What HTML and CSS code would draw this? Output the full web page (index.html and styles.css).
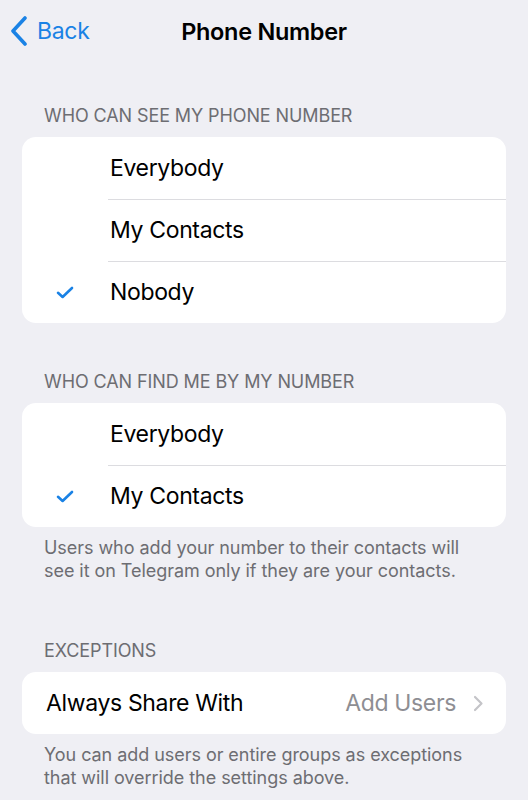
FILE: index.html
```html
<!DOCTYPE html>
<html>
<head>
<meta charset="utf-8">
<link rel="stylesheet" href="styles.css">
</head>
<body>
<div class="screen">
  <header class="nav">
    <div class="back">
      <svg class="back-chevron" width="18" height="30" viewBox="0 0 18 30"><path d="M15 2 L3 15 L15 28" fill="none" stroke="#1a82e5" stroke-width="3.6" stroke-linecap="round" stroke-linejoin="round"/></svg>
      <span class="back-label">Back</span>
    </div>
    <div class="title">Phone Number</div>
  </header>

  <section class="group g1">
    <div class="group-header">WHO CAN SEE MY PHONE NUMBER</div>
    <div class="card">
      <div class="row"><span class="check"></span><span class="label">Everybody</span></div>
      <div class="row"><span class="check"></span><span class="label">My Contacts</span></div>
      <div class="row"><span class="check"><svg width="18" height="13" viewBox="0 0 18 13"><path d="M2 6.8 L6.6 11 L16 2" fill="none" stroke="#1a82e5" stroke-width="2.6" stroke-linecap="round" stroke-linejoin="round"/></svg></span><span class="label">Nobody</span></div>
    </div>
  </section>

  <section class="group g2">
    <div class="group-header">WHO CAN FIND ME BY MY NUMBER</div>
    <div class="card">
      <div class="row"><span class="check"></span><span class="label">Everybody</span></div>
      <div class="row"><span class="check"><svg width="18" height="13" viewBox="0 0 18 13"><path d="M2 6.8 L6.6 11 L16 2" fill="none" stroke="#1a82e5" stroke-width="2.6" stroke-linecap="round" stroke-linejoin="round"/></svg></span><span class="label">My Contacts</span></div>
    </div>
    <div class="group-footer">Users who add your number to their contacts will see it on Telegram only if they are your contacts.</div>
  </section>

  <section class="group g3">
    <div class="group-header">EXCEPTIONS</div>
    <div class="card">
      <div class="row plain">
        <span class="label">Always Share With</span>
        <span class="value">Add Users</span>
        <svg class="disclosure" width="11" height="17" viewBox="0 0 11 17"><path d="M2 2 L8.5 8.5 L2 15" fill="none" stroke="#c4c4c8" stroke-width="2.2" stroke-linecap="round" stroke-linejoin="round"/></svg>
      </div>
    </div>
    <div class="group-footer">You can add users or entire groups as exceptions that will override the settings above.</div>
  </section>
</div>
</body>
</html>
```
FILE: styles.css
```css
html, body {
  margin: 0;
  padding: 0;
  background: #efeff4;
}
body {
  font-family: Inter, "Noto Sans", sans-serif;
  color: #000;
  -webkit-font-smoothing: antialiased;
}
.screen {
  width: 528px;
  height: 800px;
  overflow: hidden;
}
.nav {
  height: 62px;
  position: relative;
  display: flex;
  align-items: center;
  justify-content: center;
}
.back {
  position: absolute;
  left: 10px;
  top: 0;
  height: 62px;
  display: flex;
  align-items: center;
  gap: 9px;
}
.back-label {
  color: #1a82e5;
  font-size: 23px;
  letter-spacing: -0.3px;
}
.title {
  font-size: 23.5px;
  font-weight: 600;
  letter-spacing: -0.3px;
}
.group {
  padding: 0 22px;
}
.g1 { margin-top: 43px; }
.g2 { margin-top: 48px; }
.g3 { margin-top: 58px; }
.group-header {
  padding: 0 22px 10px;
  font-size: 18px;
  line-height: 22px;
  color: #6d6d72;
  letter-spacing: -0.1px;
}
.card {
  background: #fff;
  border-radius: 14px;
  overflow: hidden;
}
.row {
  height: 62px;
  display: flex;
  align-items: center;
  position: relative;
}
.row + .row::before {
  content: "";
  position: absolute;
  left: 86px;
  right: 0;
  top: 0;
  height: 1px;
  background: #dcdce0;
}
.check {
  width: 88px;
  display: flex;
  justify-content: center;
  padding-right: 2px;
  box-sizing: border-box;
}
.check svg { display: block; }
.label {
  font-size: 23px;
  letter-spacing: -0.35px;
}
.row.plain {
  padding: 0 22px 0 24px;
}
.row.plain .label {
  flex: 1;
}
.value {
  font-size: 23px;
  color: #8e8e93;
  letter-spacing: -0.35px;
  margin-right: 17px;
}
.disclosure { display: block; }
.group-footer {
  padding: 9px 22px 0;
  font-size: 18px;
  line-height: 23px;
  color: #6d6d72;
  letter-spacing: -0.05px;
}
```
